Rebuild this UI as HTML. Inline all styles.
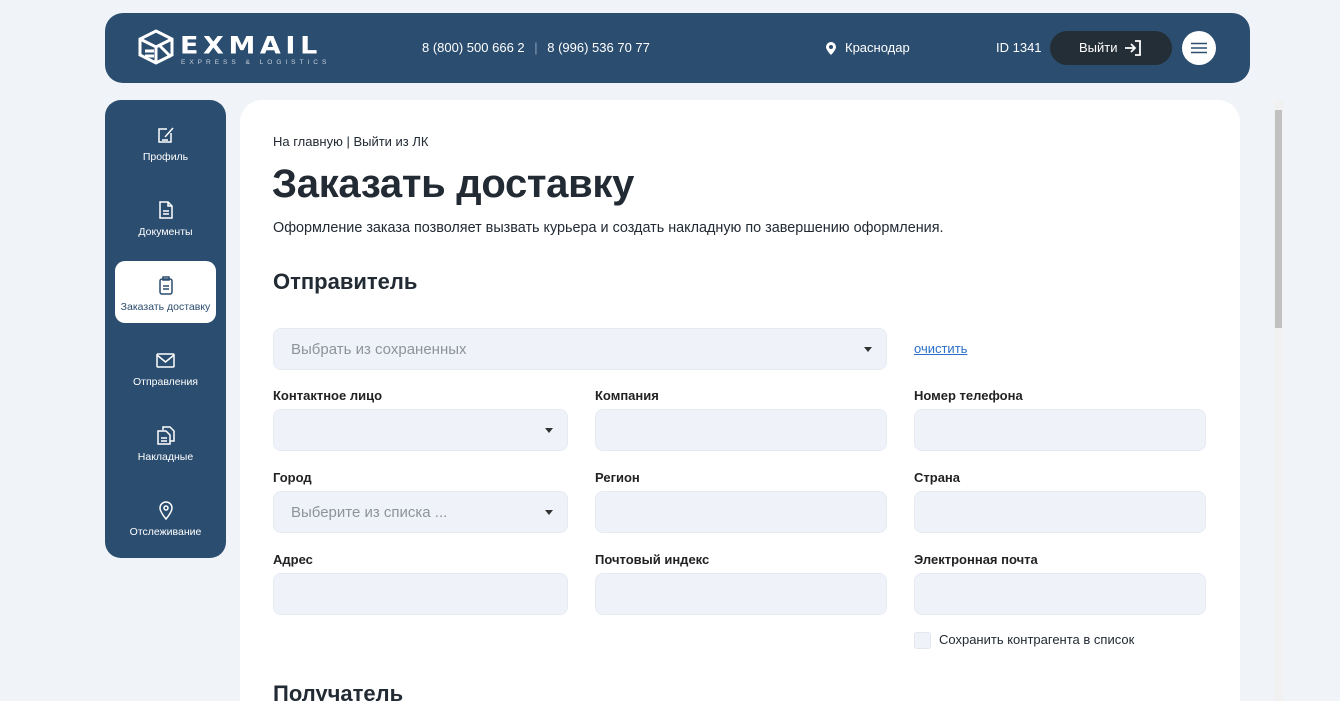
<!DOCTYPE html>
<html><head><meta charset="utf-8"><style>
*{box-sizing:border-box;margin:0;padding:0}
html,body{width:1340px;height:701px;overflow:hidden}
body{background:#f0f3f8;font-family:"Liberation Sans",Arial,sans-serif;color:#222a33;position:relative}
.abs{position:absolute}
.hdr{left:105px;top:13px;width:1145px;height:70px;background:#2b4d6f;border-radius:18px;color:#fff}
.side{left:105px;top:100px;width:121px;height:458px;background:#2b4d6f;border-radius:16px}
.item{position:absolute;left:10px;width:101px;height:62px;text-align:center;color:#fff;font-size:10.5px}
.item svg{display:block;margin:0 auto}
.item .ic{height:36px;padding-top:11px}
.item.act{background:#fff;color:#2b4d6f;border-radius:10px}
.main{left:240px;top:100px;width:1000px;height:601px;background:#fff;border-radius:22px 22px 0 0;overflow:hidden}
.inp{position:absolute;background:#eff3f9;border:1px solid #e6ebf2;border-radius:8px;height:42px}
.lbl{position:absolute;font-size:13px;font-weight:bold;color:#222}
.tri{position:absolute;right:14px;top:18px;width:0;height:0;border-left:4px solid transparent;border-right:4px solid transparent;border-top:5px solid #333}
.ph{position:absolute;left:17px;top:12px;font-size:15px;color:#8d939b}
</style></head><body>
<div class="abs hdr">
 <svg class="abs" style="left:32px;top:16px" width="38" height="36" viewBox="0 0 38 36" fill="none" stroke="#fff" stroke-width="3"><path d="M19 2L35 10V26L19 34L3 26V10Z"/><path d="M3 10L19 18L35 10M19 18V34M8 22h9M8 27h9M22 16L34 28"/></svg>
 <div class="abs" style="left:75px;top:19px;font-size:27px;font-weight:bold;letter-spacing:4.6px;font-family:'DejaVu Sans',sans-serif;transform:scaleY(0.9);transform-origin:top left">EXMAIL</div>
 <div class="abs" style="left:76px;top:46px;font-size:6.5px;letter-spacing:4px;color:#c8d2de">EXPRESS &amp; LOGISTICS</div>
 <div class="abs" style="left:317px;top:27px;font-size:13px">8 (800) 500 666 2 <span style="color:#8aa0b8;margin:0 6px">|</span> 8 (996) 536 70 77</div>
 <svg class="abs" style="left:721px;top:29px" width="10" height="13" viewBox="0 0 10 13"><path d="M5 0a5 5 0 0 1 5 5c0 3-5 8-5 8S0 8 0 5a5 5 0 0 1 5-5z" fill="#fff"/><circle cx="5" cy="5" r="2" fill="#2b4d6f"/></svg>
 <div class="abs" style="left:740px;top:27px;font-size:13px">Краснодар</div>
 <div class="abs" style="left:891px;top:27px;font-size:13px">ID 1341</div>
 <div class="abs" style="left:945px;top:18px;width:122px;height:34px;background:#242e37;border-radius:17px;font-size:13px"><span class="abs" style="left:29px;top:9px">Выйти</span>
  <svg class="abs" style="left:74px;top:9px" width="18" height="16" viewBox="0 0 18 16" fill="none" stroke="#fff" stroke-width="1.8"><path d="M1 8h10M7 4l4 4-4 4M11 1h5v14h-5"/></svg></div>
 <div class="abs" style="left:1077px;top:18px;width:34px;height:34px;background:#fff;border-radius:50%"><svg class="abs" style="left:9px;top:11px" width="16" height="12"><path d="M0 1.5h16M0 6h16M0 10.5h16" stroke="#2b4d6f" stroke-width="1.6"/></svg></div>
</div>
<div class="abs side">
 <div class="item" style="top:15px"><div class="ic"><svg width="18" height="18" viewBox="0 0 18 18" fill="none" stroke="#fff" stroke-width="1.5"><path d="M14 7v9H2V3h8M8 11l8-9M5 14h6"/></svg></div>Профиль</div>
 <div class="item" style="top:90px"><div class="ic"><svg width="16" height="18" viewBox="0 0 16 18" fill="none" stroke="#fff" stroke-width="1.5"><path d="M2 1h8l4 4v12H2zM10 1v4h4M5 10h6M5 13h6"/></svg></div>Документы</div>
 <div class="item act" style="top:161px"><div class="ic" style="padding-top:15px;height:40px"><svg width="14" height="19" viewBox="0 0 14 19" fill="none" stroke="#2b4d6f" stroke-width="1.5"><rect x="1" y="3" width="12" height="15" rx="2"/><path d="M4 1h6v3H4zM4 10h6M4 13h6"/></svg></div>Заказать доставку</div>
 <div class="item" style="top:240px"><div class="ic" style="padding-top:13px"><svg width="19" height="15" viewBox="0 0 19 15" fill="none" stroke="#fff" stroke-width="1.5"><rect x="1" y="1" width="17" height="13" rx="1"/><path d="M1 2l8.5 7L18 2"/></svg></div>Отправления</div>
 <div class="item" style="top:315px"><div class="ic"><svg width="18" height="19" viewBox="0 0 18 19" fill="none" stroke="#fff" stroke-width="1.5"><path d="M6 4V1h7l4 4v10h-4"/><path d="M1 5h8l4 4v9H1zM4 12h6M4 15h6"/></svg></div>Накладные</div>
 <div class="item" style="top:390px"><div class="ic"><svg width="14" height="19" viewBox="0 0 14 19" fill="none" stroke="#fff" stroke-width="1.5"><path d="M7 1a6 6 0 0 1 6 6c0 4-6 11-6 11S1 11 1 7a6 6 0 0 1 6-6z"/><circle cx="7" cy="7" r="2"/></svg></div>Отслеживание</div>
</div>
<div class="abs main">
 <div class="abs" style="left:33px;top:34px;font-size:13px">На главную | Выйти из ЛК</div>
 <div class="abs" style="left:32px;top:62px;font-size:40px;font-weight:bold;color:#222a33;letter-spacing:-0.3px">Заказать доставку</div>
 <div class="abs" style="left:33px;top:120px;font-size:14.4px">Оформление заказа позволяет вызвать курьера и создать накладную по завершению оформления.</div>
 <div class="abs" style="left:33px;top:169px;font-size:22px;font-weight:bold">Отправитель</div>
 <div class="inp" style="left:33px;top:228px;width:614px"><span class="ph">Выбрать из сохраненных</span><div class="tri"></div></div>
 <div class="abs" style="left:674px;top:241px;font-size:13px;color:#2a6fc9;text-decoration:underline">очистить</div>
 <div class="lbl" style="left:33px;top:288px">Контактное лицо</div>
 <div class="lbl" style="left:355px;top:288px">Компания</div>
 <div class="lbl" style="left:674px;top:288px">Номер телефона</div>
 <div class="inp" style="left:33px;top:309px;width:295px"><div class="tri"></div></div>
 <div class="inp" style="left:355px;top:309px;width:292px"></div>
 <div class="inp" style="left:674px;top:309px;width:292px"></div>
 <div class="lbl" style="left:33px;top:370px">Город</div>
 <div class="lbl" style="left:355px;top:370px">Регион</div>
 <div class="lbl" style="left:674px;top:370px">Страна</div>
 <div class="inp" style="left:33px;top:391px;width:295px"><span class="ph">Выберите из списка ...</span><div class="tri"></div></div>
 <div class="inp" style="left:355px;top:391px;width:292px"></div>
 <div class="inp" style="left:674px;top:391px;width:292px"></div>
 <div class="lbl" style="left:33px;top:452px">Адрес</div>
 <div class="lbl" style="left:355px;top:452px">Почтовый индекс</div>
 <div class="lbl" style="left:674px;top:452px">Электронная почта</div>
 <div class="inp" style="left:33px;top:473px;width:295px"></div>
 <div class="inp" style="left:355px;top:473px;width:292px"></div>
 <div class="inp" style="left:674px;top:473px;width:292px"></div>
 <div class="abs" style="left:674px;top:532px;width:17px;height:17px;background:#eff3f9;border:1px solid #e3e8ef;border-radius:3px"></div>
 <div class="abs" style="left:699px;top:532px;font-size:13px">Сохранить контрагента в список</div>
 <div class="abs" style="left:33px;top:581px;font-size:22px;font-weight:bold">Получатель</div>
</div>
<div class="abs" style="left:1274px;top:100px;width:9px;height:601px;background:#f1f1f1"></div>
<div class="abs" style="left:1275px;top:110px;width:7px;height:218px;background:#c1c1c1"></div>
</body></html>
